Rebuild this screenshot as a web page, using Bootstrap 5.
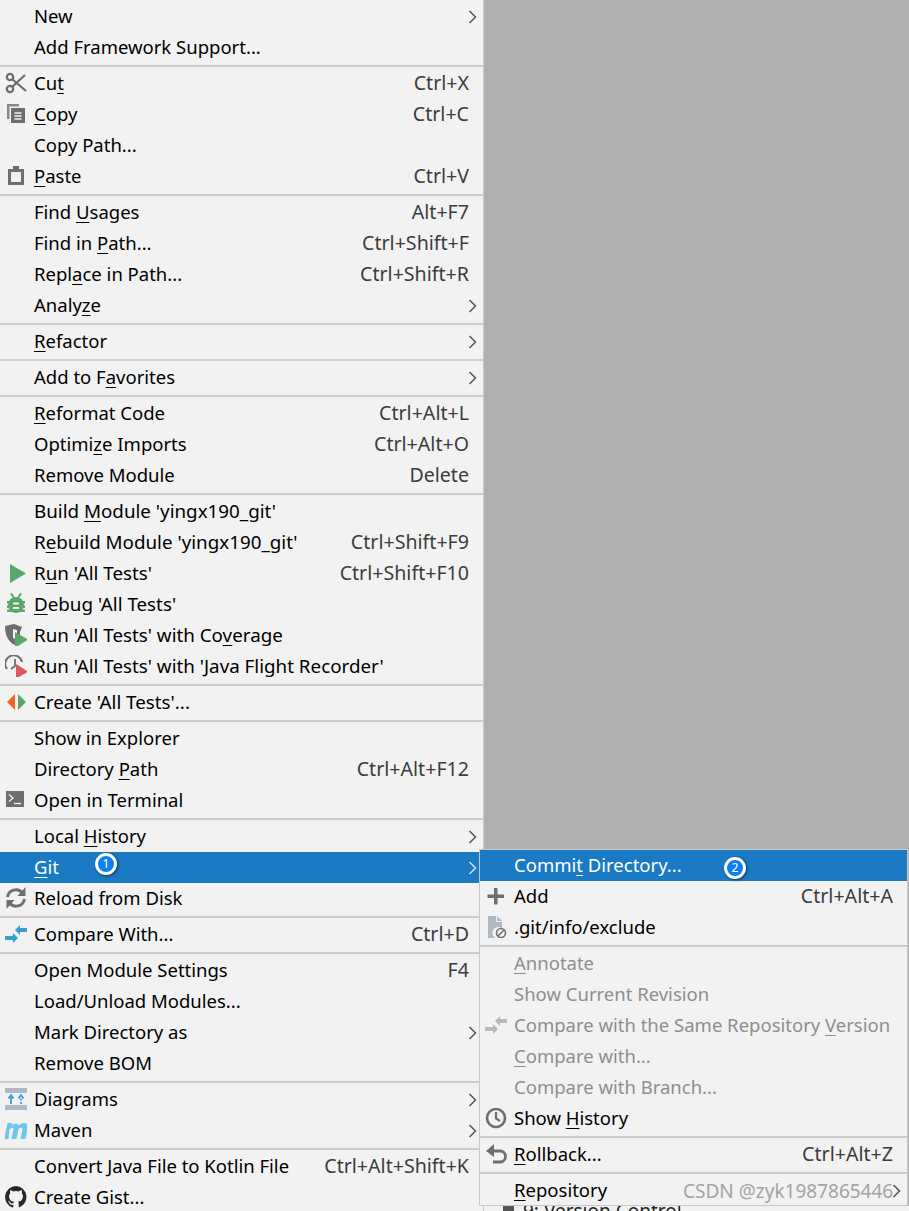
<!DOCTYPE html>
<html lang="en"><head><meta charset="utf-8"><title>Menu</title>
<link href="https://cdn.jsdelivr.net/npm/bootstrap@5.3.0/dist/css/bootstrap.min.css" rel="stylesheet">
<style>
html,body{margin:0;height:1211px;overflow:hidden;background:#b0b0b0}
body{font-family:"Noto Sans","Liberation Sans",sans-serif;font-size:18.5px;color:#000}
.stage{position:relative;width:909px;height:1211px;overflow:hidden}
.mainmenu{width:484px;height:1211px;background:#f2f2f2;border-right:1px solid #c8c8c8;padding-top:1px;overflow:hidden}
.mi{height:31px;line-height:30px;padding:0 14px 0 34px;white-space:nowrap;position:relative}
.mi u{text-underline-offset:3px;text-decoration-thickness:1px}
.quoted{font-size:18.8px;line-height:31px}
.key{color:#3c3c3c;font-size:19.6px;line-height:30px}
.sep{height:5px;padding:2px 0 1px}
.sep::before{content:"";display:block;height:2px;background:#cdcdcd}
.sel{background:#1b7ac4;color:#fff}
.sel .key{color:#fff}
.dis{color:#8e8e8e}
.arr{position:absolute;right:6px;top:9px;width:9px;height:14px;color:#555}
.sel .arr{color:#cfe4f5}
.ic{position:absolute;left:5px;top:4px;width:22px;height:22px}
.submenu{position:absolute;left:479px;top:849px;width:429px;height:357px;background:#f2f2f2;border:1px solid #c8c8c8}
.submenu .mi{padding-left:34px;padding-right:14px}
.submenu .ic{left:5px}
.below{position:absolute;left:484px;top:1206px;width:425px;height:5px;background:#f2f2f2;overflow:hidden}
.below i{position:absolute;left:19px;top:0;width:11px;height:5px;background:#555}
.below span{position:absolute;left:39px;top:-9px;font-size:19px;color:#222}
.num{position:absolute;width:22px;height:22px;border-radius:50%;background:#0d7df2;border:3px solid #fff;color:#fff;font-size:12px;line-height:16px;text-align:center;box-shadow:1px 1px 3px rgba(0,0,0,.55)}
.n1{left:95px;top:853px}
.n2{left:724px;top:857px}
.wm{position:absolute;left:683px;top:1177px;font-size:19px;color:#a3a3a3;white-space:nowrap}
</style></head><body>
<svg width="0" height="0" class="position-absolute"><defs>
<symbol id="chev" viewBox="0 0 9 14"><path d="M1.500 1l6 6-6 6" fill="none" stroke="currentColor" stroke-width="1.500"/></symbol>
</defs></svg>
<div class="stage">
<div class="mainmenu" id="m"></div>
<div class="submenu" id="s"></div>
<div class="below"><i></i><span>9: Version Control</span></div>
<div class="num n1">1</div>
<div class="num n2">2</div>
<div class="wm">CSDN @zyk1987865446</div>
</div>
<script>
const arrows='<path d="M10 7l5-5v3h7v4h-7v3z"/><path d="M13 15l-5-5v3H0v4h8v3z"/>';
const I={
cut:'<g fill="none" stroke="#6e6e6e" stroke-width="2.200"><circle cx="5" cy="5" r="3.200"/><circle cx="5" cy="17" r="3.200"/><path d="M7 7l14 12M7 15L20 3"/></g>',
copy:'<path d="M2 1h12v2.500H4.500V16H2z" fill="#6e6e6e" opacity=".8"/><path d="M6 5h14v15H6z" fill="#6e6e6e"/><path d="M9.500 10h7M9.500 13h7M9.500 16h7" stroke="#f2f2f2" stroke-width="1.300"/>',
paste:'<path d="M3 4h5V1h6v3h5v16H3z" fill="#6e6e6e"/><path d="M6 7h10v10H6z" fill="#f2f2f2"/>',
run:'<path d="M5 2l16 9.500L5 21z" fill="#59a869"/>',
debug:'<g fill="#59a869"><ellipse cx="11" cy="12" rx="8" ry="8"/><path d="M5 1l4 5 1-1-3-5zM17 1l-4 5-1-1 3-5z"/><path d="M2 8h18v2.500H2zM2 12.500h18V15H2zM2 16.500h18V19H2z"/></g><path d="M8 9.500h6v2H8zM8 14h6v2H8z" fill="#f2f2f2"/>',
cov:'<path d="M0 2l9-2 8 3-2 5v9l-5 4C3 18 0 11 0 2z" fill="#6e6e6e"/><path d="M8 5l4 1v10l-4-2z" fill="#f2f2f2"/><path d="M10 8l13 7.500L10 24z" fill="#59a869"/>',
jfr:'<path d="M2 14A8.500 8.500 0 1 1 17 7" fill="none" stroke="#6e6e6e" stroke-width="2"/><path d="M10 4v7l-4 3" fill="none" stroke="#6e6e6e" stroke-width="1.800"/><path d="M11 9l12 7.500L11 24z" fill="#db5860"/>',
create:'<path d="M10 3v16L2 11z" fill="#f26522"/><path d="M13 3v16l8-8z" fill="#59a869"/>',
term:'<rect x="1" y="2" width="18" height="16" fill="#6e6e6e"/><path d="M4 5.500l4 3.500-4 3.500" fill="none" stroke="#f2f2f2" stroke-width="1.400"/><path d="M9 14.500h7" stroke="#f2f2f2" stroke-width="1.400"/>',
reload:'<g fill="none" stroke="#6e6e6e" stroke-width="2.800"><path d="M2.500 10a8.500 8.500 0 0 1 15-4"/><path d="M19.500 12a8.500 8.500 0 0 1-15 4"/></g><path d="M20.500 0v9h-8zM1.500 22v-9h8z" fill="#6e6e6e"/>',
comp:`<g fill="#389fd6">${arrows}</g>`,
diag:'<path d="M0 0h22v5H0zM0 17h22v5H0z" fill="#afb9c3"/><path d="M6 16V8M3.500 10.500L6 7l2.500 3.500" fill="none" stroke="#389fd6" stroke-width="1.800"/><path d="M16 16V9" stroke="#389fd6" stroke-width="1.800" stroke-dasharray="2 1.500"/><path d="M13.500 10.500L16 7l2.500 3.500" fill="none" stroke="#389fd6" stroke-width="1.800"/>',
maven:'<path d="M-1 20L2.500 4h5L7 6.500C9 4 12.500 3.500 13.500 6.500c2.500-3 9-4 9.500 1.500L20.500 20h-5l2-10c0-2-2.500-1.500-4 0L11.500 20h-5l2-10c0-2-2.500-1.500-4 .5L3.500 20z" fill="#6ec6ec"/>',
gh:'<path d="M11 0a11 11 0 0 0-3.500 21.400c.5.100.8-.2.800-.6v-2c-3 .7-3.700-1.400-3.700-1.400-.5-1.300-1.200-1.600-1.200-1.600-1-.7.100-.7.100-.7 1.100.1 1.700 1.100 1.700 1.100 1 1.700 2.600 1.200 3.200.9.100-.7.400-1.200.7-1.500-2.400-.3-5-1.200-5-5.400 0-1.200.4-2.200 1.100-2.900-.1-.3-.5-1.400.1-2.900 0 0 .9-.3 3 1.100a10 10 0 0 1 5.400 0c2.100-1.400 3-1.100 3-1.100.6 1.500.2 2.600.1 2.900.7.700 1.100 1.700 1.100 2.900 0 4.200-2.600 5.100-5 5.400.4.300.8 1 .8 2v3c0 .4.300.7.800.6A11 11 0 0 0 11 0z" fill="#24292e"/>',
plus:'<path d="M9 3h3.500v6.500H19V13h-6.500v6.500H9V13H2.500V9.500H9z" fill="#6e6e6e"/>',
excl:'<path d="M3 0h8v6h6v6a6 6 0 0 0-7 10H3z" fill="#afb9c3"/><path d="M12 0l5 5h-5z" fill="#afb9c3"/><circle cx="16" cy="17" r="4.500" fill="#f2f2f2" stroke="#6e6e6e" stroke-width="1.600"/><path d="M13 20l6-6" stroke="#6e6e6e" stroke-width="1.600"/>',
compd:`<g fill="#b9b9b9">${arrows}</g>`,
hist:'<circle cx="11" cy="11" r="9" fill="none" stroke="#6e6e6e" stroke-width="2.600"/><path d="M11 5V11.500l4 2.500" fill="none" stroke="#6e6e6e" stroke-width="2.200"/>',
roll:'<path d="M7 8h8a5.500 5.500 0 0 1 0 11H8" fill="none" stroke="#6e6e6e" stroke-width="2.800"/><path d="M9 1v13L1 8z" fill="#6e6e6e"/>'
};
const M=[["New",,,1],["Add Framework Support..."],0,
["Cu<u>t</u>","Ctrl+X",'cut'],["<u>C</u>opy","Ctrl+C",'copy'],["Copy Path..."],["<u>P</u>aste","Ctrl+V",'paste'],0,
["Find <u>U</u>sages","Alt+F7"],["Find in <u>P</u>ath...","Ctrl+Shift+F"],["Repl<u>a</u>ce in Path...","Ctrl+Shift+R"],["Analy<u>z</u>e",,,1],0,
["<u>R</u>efactor",,,1],0,["Add to F<u>a</u>vorites",,,1],0,
["<u>R</u>eformat Code","Ctrl+Alt+L"],["Optimi<u>z</u>e Imports","Ctrl+Alt+O"],["Remove Module","Delete"],0,
["Build <u>M</u>odule 'yingx190_git'"],["R<u>e</u>build Module 'yingx190_git'","Ctrl+Shift+F9"],["R<u>u</u>n 'All Tests'","Ctrl+Shift+F10",'run'],["<u>D</u>ebug 'All Tests'",,'debug'],["Run 'All Tests' with Co<u>v</u>erage",,'cov'],["Run 'All Tests' with 'Java Flight Recorder'",,'jfr'],0,
["Create 'All Tests'...",,'create'],0,
["Show in Explorer"],["Directory <u>P</u>ath","Ctrl+Alt+F12"],["Open in Terminal",,'term'],0,
["Local <u>H</u>istory",,,1],["<u>G</u>it",,,1,'sel'],["Reload from Disk",,'reload'],0,
["Compare With...","Ctrl+D",'comp'],0,
["Open Module Settings","F4"],["Load/Unload Modules..."],["Mark Directory as",,,1],["Remove BOM"],0,
["Diagrams",,'diag',1],["Maven",,'maven',1],0,
["Convert Java File to Kotlin File","Ctrl+Alt+Shift+K"],["Create Gist...",,'gh']];
const S=[["Commi<u>t</u> Directory...",,,,'sel'],["Add","Ctrl+Alt+A",'plus'],[".git/info/exclude",,'excl'],0,
["<u>A</u>nnotate",,,,'dis'],["Show Current Revision",,,,'dis'],["Compare with the Same Repository <u>V</u>ersion",,'compd',,'dis'],["<u>C</u>ompare with...",,,,'dis'],["Compare with Branch...",,,,'dis'],["Show <u>H</u>istory",,'hist'],0,
["<u>R</u>ollback...","Ctrl+Alt+Z",'roll'],0,["<u>R</u>epository",,,1]];
function r(a){return a.map(x=>{if(!x)return '<div class="sep"></div>';
const [t,k,ic,ar,c]=x;
const q=t.includes("'")?' class="quoted"':'';
return `<div class="mi d-flex justify-content-between ${c||''}">`+(ic?`<svg class="ic" viewBox="0 0 22 22">${I[ic]}</svg>`:'')+`<span${q}>${t}</span>`+(k?`<span class="key">${k}</span>`:'')+(ar?`<svg class="arr"><use href="#chev"/></svg>`:'')+`</div>`}).join('')}
document.getElementById('m').innerHTML=r(M);
document.getElementById('s').innerHTML=r(S);
</script>
<script src="https://cdn.jsdelivr.net/npm/bootstrap@5.3.0/dist/js/bootstrap.bundle.min.js"></script>
</body></html>
